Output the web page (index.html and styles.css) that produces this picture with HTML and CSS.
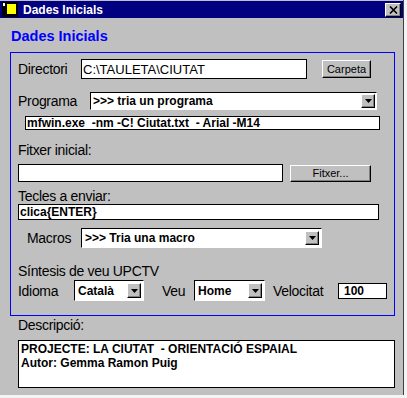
FILE: index.html
```html
<!DOCTYPE html>
<html lang="ca">
<head>
    <meta charset="UTF-8">
    <title>Dades Inicials</title>
    <link rel="stylesheet" href="styles.css">
</head>
<body>
    <div class="window">
        <div class="titlebar">
            <svg class="app-icon" width="16" height="15" viewBox="0 0 16 15">
                <rect x="0" y="0" width="16" height="15" fill="#000"/>
                <rect x="1" y="1" width="2" height="3" fill="#fff"/>
                <rect x="5" y="2" width="9" height="10" fill="#ffff00"/>
            </svg>
            <span class="title">Dades Inicials</span>
            <span class="close-btn">
                <svg width="9" height="8" viewBox="0 0 9 8">
                    <path d="M1 0.5 L8 7.5 M8 0.5 L1 7.5" stroke="#000" stroke-width="1.6"/>
                </svg>
            </span>
        </div>

        <h1 class="heading">Dades Inicials</h1>

        <div class="panel">
            <!-- directori -->
            <div class="row row-dir">
                <span class="lbl lbl-dir">Directori</span>
                <div class="field field-dir">C:\TAULETA\CIUTAT</div>
                <span class="btn btn-carpeta">Carpeta</span>
            </div>

            <!-- programa -->
            <div class="row row-prog">
                <span class="lbl lbl-prog">Programa</span>
                <div class="combo combo-prog">
                    <span class="combo-text">&gt;&gt;&gt; tria un programa</span>
                    <span class="combo-btn"><svg width="7" height="4" viewBox="0 0 7 4"><polygon points="0,0 7,0 3.5,4" fill="#000"/></svg></span>
                </div>
            </div>

            <div class="row row-cmd">
                <div class="field bold field-cmd">mfwin.exe  -nm -C! Ciutat.txt  - Arial -M14</div>
            </div>

            <!-- fitxer inicial -->
            <div class="lbl line-fitxer">Fitxer inicial:</div>
            <div class="row row-fitxer">
                <div class="field field-fitxer"></div>
                <span class="btn btn-fitxer">Fitxer...</span>
            </div>

            <!-- tecles -->
            <div class="lbl line-tecles">Tecles a enviar:</div>
            <div class="row row-tecles">
                <div class="field bold field-tecles">clica{ENTER}</div>
            </div>

            <!-- macros -->
            <div class="row row-macros">
                <span class="lbl lbl-macros">Macros</span>
                <div class="combo combo-macros">
                    <span class="combo-text">&gt;&gt;&gt; Tria una macro</span>
                    <span class="combo-btn"><svg width="7" height="4" viewBox="0 0 7 4"><polygon points="0,0 7,0 3.5,4" fill="#000"/></svg></span>
                </div>
            </div>

            <!-- sintesi de veu -->
            <div class="lbl line-sintesi">Síntesis de veu UPCTV</div>
            <div class="row row-veu">
                <span class="lbl lbl-idioma">Idioma</span>
                <div class="combo combo-idioma">
                    <span class="combo-text">Català</span>
                    <span class="combo-btn"><svg width="7" height="4" viewBox="0 0 7 4"><polygon points="0,0 7,0 3.5,4" fill="#000"/></svg></span>
                </div>
                <span class="lbl lbl-veu">Veu</span>
                <div class="combo combo-veu">
                    <span class="combo-text">Home</span>
                    <span class="combo-btn"><svg width="7" height="4" viewBox="0 0 7 4"><polygon points="0,0 7,0 3.5,4" fill="#000"/></svg></span>
                </div>
                <span class="lbl lbl-vel">Velocitat</span>
                <div class="field bold field-vel">100</div>
            </div>
        </div>

        <div class="lbl line-desc">Descripció:</div>
        <div class="memo">PROJECTE: LA CIUTAT  - ORIENTACIÓ ESPAIAL
Autor: Gemma Ramon Puig</div>
    </div>
</body>
</html>
```

FILE: styles.css
```css
:root {
    --face: #c0c0c0;
    --shadow: #808080;
    --navy: #000080;
    --blue: #0000ff;
}

* {
    box-sizing: border-box;
    margin: 0;
    padding: 0;
}

body {
    font-family: 'Liberation Sans', Arial, sans-serif;
    background: #f4f4f4;
    width: 407px;
    height: 398px;
    overflow: hidden;
}

.window {
    width: 404px;
    height: 395px;
    background: var(--face);
    border-right: 1px solid #404040;
    padding-top: 1px;
}

/* title bar */
.titlebar {
    height: 17px;
    background: var(--navy);
    display: flex;
    align-items: center;
    padding-left: 2px;
}

.app-icon {
    display: block;
}

.title {
    color: #fff;
    font-weight: bold;
    font-size: 12px;
    margin-left: 5px;
}

.close-btn {
    margin-left: auto;
    margin-right: 2px;
    width: 16px;
    height: 14px;
    background: var(--face);
    border: 1px solid;
    border-color: #fff #000 #000 #fff;
    box-shadow: inset -1px -1px var(--shadow);
    display: flex;
    align-items: center;
    justify-content: center;
}

.close-btn svg {
    display: block;
}

.heading {
    margin: 10px 0 0 11px;
    font-size: 14.5px;
    line-height: 17px;
    color: var(--blue);
    font-weight: bold;
}

.panel {
    margin: 7px 0 0 10px;
    width: 385px;
    height: 264px;
    border: 1px solid var(--blue);
    padding-top: 6px;
}

.row {
    display: flex;
    align-items: center;
    padding-left: 7px;
}

.lbl {
    font-size: 14px;
    letter-spacing: -0.3px;
    line-height: 16px;
    color: #000;
    flex: none;
    white-space: nowrap;
}

/* controls */
.field {
    background: #fff;
    border: 1px solid #000;
    font-size: 13px;
    padding-left: 1px;
    display: flex;
    align-items: center;
    white-space: pre;
    overflow: hidden;
    flex: none;
}

.field.bold {
    font-size: 12px;
    font-weight: bold;
}

.btn {
    background: var(--face);
    border: 1px solid;
    border-color: #fff #000 #000 #fff;
    box-shadow: inset -1px -1px var(--shadow);
    font-size: 11px;
    display: flex;
    align-items: center;
    justify-content: center;
    flex: none;
}

.combo {
    display: flex;
    background: #fff;
    border: 1px solid;
    border-color: #000 #fff #fff #000;
    padding: 1px;
    flex: none;
}

.combo-text {
    flex: 1;
    align-self: center;
    font-size: 12px;
    font-weight: bold;
    padding-left: 1px;
    white-space: nowrap;
}

.combo-btn {
    width: 14px;
    background: var(--face);
    border: 1px solid;
    border-color: #fff #000 #000 #fff;
    box-shadow: inset -1px -1px var(--shadow);
    display: flex;
    align-items: center;
    justify-content: center;
}

.combo-btn svg {
    display: block;
}

/* rows */
.row-dir {
    height: 20px;
}

.lbl-dir {
    width: 63px;
}

.field-dir {
    width: 226px;
    height: 20px;
}

.btn-carpeta {
    margin-left: 15px;
    width: 49px;
    height: 18px;
}

.row-prog {
    margin-top: 13px;
    height: 18px;
}

.lbl-prog {
    width: 72px;
}

.combo-prog {
    width: 287px;
    height: 18px;
}

.row-cmd {
    margin-top: 6px;
    padding-left: 14px;
}

.field-cmd {
    width: 355px;
    height: 14px;
}

.line-fitxer {
    margin: 12px 0 0 7px;
}

.row-fitxer {
    margin-top: 6px;
    height: 18px;
}

.field-fitxer {
    width: 265px;
    height: 18px;
}

.btn-fitxer {
    margin-left: 7px;
    width: 81px;
    height: 17px;
}

.line-tecles {
    margin: 6px 0 0 7px;
}

.field-tecles {
    width: 361px;
    height: 16px;
}

.row-macros {
    margin-top: 8px;
    height: 20px;
    padding-left: 16px;
}

.lbl-macros {
    width: 54px;
}

.combo-macros {
    width: 241px;
    height: 20px;
    padding: 2px;
}

.line-sintesi {
    margin: 15px 0 0 7px;
}

.row-veu {
    margin-top: 1px;
    height: 21px;
}

.lbl-idioma {
    width: 56px;
}

.combo-idioma {
    width: 70px;
    height: 21px;
    padding: 2px;
}

.lbl-veu {
    margin-left: 18px;
    width: 32px;
}

.combo-veu {
    width: 71px;
    height: 21px;
    padding: 2px;
}

.lbl-vel {
    margin-left: 8px;
    width: 65px;
}

.field-vel {
    width: 49px;
    height: 16px;
    padding-left: 5px;
}

/* descripcio */
.line-desc {
    margin: 1px 0 0 18px;
}

.memo {
    margin: 7px 0 0 18px;
    width: 377px;
    height: 48px;
    background: #fff;
    border: 1px solid #000;
    padding: 1px 2px;
    font-size: 12px;
    font-weight: bold;
    line-height: 14px;
    white-space: pre;
}
```
